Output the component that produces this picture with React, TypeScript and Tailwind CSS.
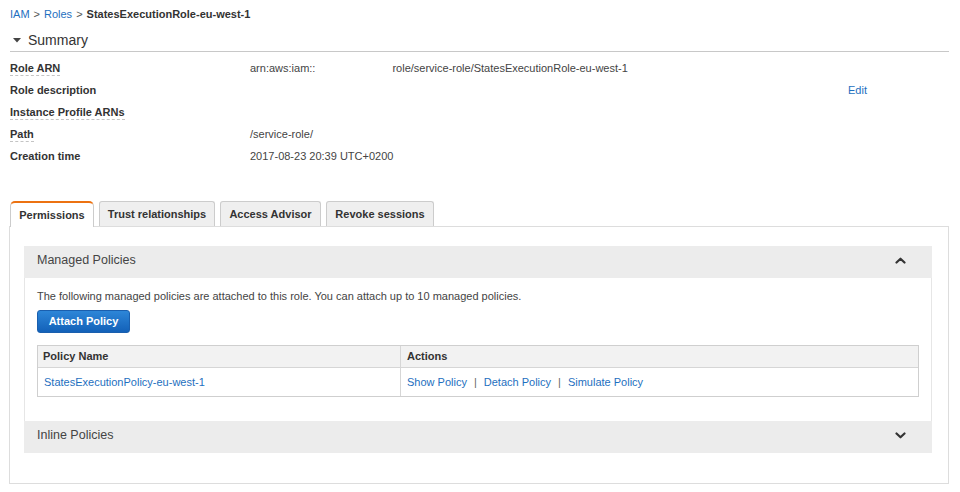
import React from "react";

const Chevron = ({ up }: { up?: boolean }) => (
  <svg width="11" height="7" viewBox="0 0 11 7" className="block -mt-[3px]">
    <polyline
      points={up ? "1.5,5.5 5.5,1.7 9.5,5.5" : "1.5,1.5 5.5,5.3 9.5,1.5"}
      fill="none"
      stroke="#333"
      strokeWidth="2.2"
      strokeLinecap="round"
      strokeLinejoin="round"
    />
  </svg>
);

const Row = ({ label, dashed, children, right }: { label: string; dashed?: boolean; children?: React.ReactNode; right?: React.ReactNode }) => (
  <div className="flex h-[22px] items-center">
    <div className="w-[241px] pl-[1px]">
      <span className={"font-bold text-[#333] " + (dashed ? "border-b border-dashed border-[#c4c4c4] pb-[1px]" : "")}>{label}</span>
    </div>
    <div className="flex-1 text-[#444]">{children}</div>
    {right}
  </div>
);

export default function App() {
  return (
    <div className="w-[960px] h-[492px] bg-white overflow-hidden pl-[9px] pr-[11px] text-[11px] text-[#444]" style={{ fontFamily: '"Liberation Sans", Arial, sans-serif' }}>
      {/* breadcrumb */}
      <div className="h-[28px] flex items-center pl-[1px] text-[11px]">
        <span className="text-[#1e6fc0]">IAM</span>
        <span className="mx-[4px] text-[#555]">&gt;</span>
        <span className="text-[#1e6fc0]">Roles</span>
        <span className="mx-[4px] text-[#555]">&gt;</span>
        <span className="font-bold text-[#333]">StatesExecutionRole-eu-west-1</span>
      </div>

      {/* summary header */}
      <div className="ml-[1px] pt-[4px] pb-[2px] border-b border-[#c8c8c8] flex items-center leading-[17px]">
        <svg width="8" height="5" viewBox="0 0 8 5" className="ml-[3px] mr-[7px]">
          <polygon points="0,0 8,0 4,4.5" fill="#444" />
        </svg>
        <span className="text-[14px] text-[#333]">Summary</span>
      </div>

      {/* rows */}
      <div className="mt-[5px]">
        <Row label="Role ARN" dashed>
          <span>arn:aws:iam::</span>
          <span className="inline-block w-[77px]"></span>
          <span>role/service-role/StatesExecutionRole-eu-west-1</span>
        </Row>
        <Row label="Role description" right={<span className="text-[#1e6fc0] mr-[82px]">Edit</span>} />
        <Row label="Instance Profile ARNs" dashed />
        <Row label="Path" dashed>/service-role/</Row>
        <Row label="Creation time">2017-08-23 20:39 UTC+0200</Row>
      </div>

      {/* tabs */}
      <div className="mt-[33px] flex gap-[5px] pl-[1px] h-[26px] items-end relative z-10">
        <div className="w-[84px] h-[26px] -mb-px bg-white border border-[#ccc] border-b-0 border-t-2 border-t-[#ec7211] rounded-t-[5px] flex items-center justify-center font-bold text-[#333]">Permissions</div>
        <div className="w-[116px] h-[25px] bg-[#efefef] border border-[#ccc] border-b-0 rounded-t-[3px] flex items-center justify-center font-bold text-[#333]">Trust relationships</div>
        <div className="w-[101px] h-[25px] bg-[#efefef] border border-[#ccc] border-b-0 rounded-t-[3px] flex items-center justify-center font-bold text-[#333]">Access Advisor</div>
        <div className="w-[108px] h-[25px] bg-[#efefef] border border-[#ccc] border-b-0 rounded-t-[3px] flex items-center justify-center font-bold text-[#333]">Revoke sessions</div>
      </div>

      {/* panel */}
      <div className="border border-[#ddd] pl-[14px] pr-[16px] pt-[19px] pb-[30px]">
        {/* managed policies */}
        <div className="h-[32px] bg-[#ececec] flex items-center justify-between pl-[13px] pr-[26px]">
          <span className="text-[12.5px] text-[#444] -mt-[3px]">Managed Policies</span>
          <Chevron up />
        </div>
        <div className="border-x border-[#e6e6e6] pl-[12px] pr-[12px] pt-[11px] pb-[24px]">
          <div className="leading-[14px] text-[#444]">The following managed policies are attached to this role. You can attach up to 10 managed policies.</div>
          <button className="mt-[7px] h-[23px] w-[93px] rounded-[3px] border border-[#1a5fae] bg-gradient-to-b from-[#2d86d8] to-[#1361b8] text-white font-bold text-[11px] flex items-center justify-center" style={{ fontFamily: '"Liberation Sans", Arial, sans-serif' }}>Attach Policy</button>
          <div className="mt-[12px] border border-[#cfcfcf]">
            <div className="flex h-[22px] bg-[#f2f2f2] border-b border-[#d6d6d6] font-bold text-[#333]">
              <div className="w-[363px] border-r border-[#d6d6d6] flex items-center pl-[5px]">Policy Name</div>
              <div className="flex-1 flex items-center pl-[6px]">Actions</div>
            </div>
            <div className="flex h-[28px]">
              <div className="w-[363px] border-r border-[#d6d6d6] flex items-center pl-[6px] text-[#1e6fc0]">StatesExecutionPolicy-eu-west-1</div>
              <div className="flex-1 flex items-center pl-[6px]">
                <span className="text-[#1e6fc0]">Show Policy</span>
                <span className="mx-[7px] text-[#666]">|</span>
                <span className="text-[#1e6fc0]">Detach Policy</span>
                <span className="mx-[7px] text-[#666]">|</span>
                <span className="text-[#1e6fc0]">Simulate Policy</span>
              </div>
            </div>
          </div>
        </div>
        {/* inline policies */}
        <div className="h-[32px] bg-[#ececec] flex items-center justify-between pl-[13px] pr-[26px]">
          <span className="text-[12.5px] text-[#444] -mt-[3px]">Inline Policies</span>
          <Chevron />
        </div>
      </div>
    </div>
  );
}
